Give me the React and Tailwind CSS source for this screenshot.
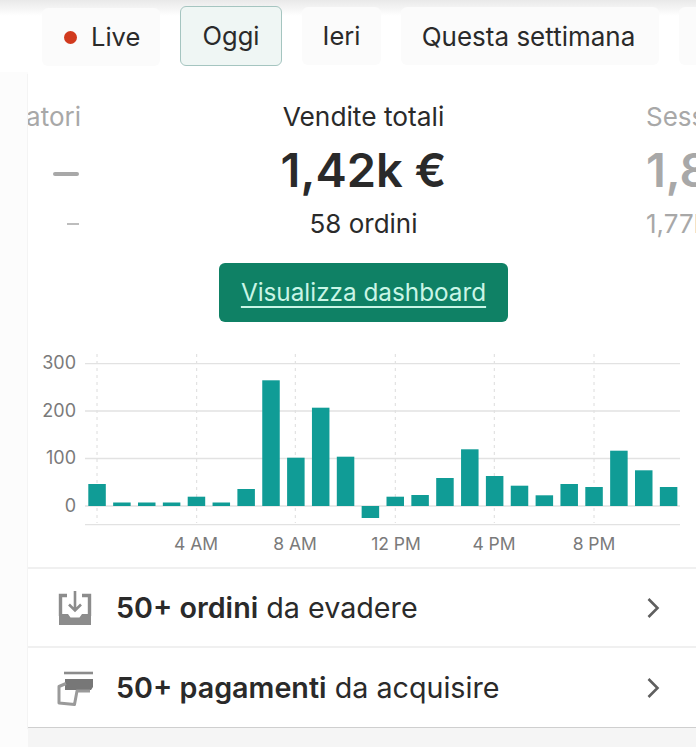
import React from "react";

const tops = [484, 502.5, 502.5, 502.5, 496.7, 502.5, 489, 380.3, 457.7, 407.7, 456.7, 518, 496.7, 495, 478, 449.3, 476, 485.7, 495.3, 484, 487, 450.7, 470.3, 487];
const base = 506;
const gridY = [363.7, 411, 458.5, 506, 524.7];
const yLabels = [["300", 362], ["200", 410], ["100", 457], ["0", 505]];
const xLabels = [["4 AM", 196], ["8 AM", 295], ["12 PM", 396], ["4 PM", 494], ["8 PM", 594]];
const vLines = [97, 196.7, 295.3, 395.3, 494.3, 594];

function Chart() {
  return (
    <svg viewBox="28 340 668 227" className="block w-[668px] h-[227px]">
      {vLines.map((x) => (
        <line key={x} x1={x} x2={x} y1="354" y2="523" stroke="#dcdcdc" strokeWidth="1" strokeDasharray="3 4" />
      ))}
      {gridY.map((y) => (
        <line key={y} x1="85" x2="680" y1={y} y2={y} stroke="#e2e2e2" strokeWidth="1.3" />
      ))}
      {tops.map((t, i) => {
        const x = 88.3 + 24.85 * i;
        const y = Math.min(t, base);
        const h = Math.abs(t - base);
        return <rect key={i} x={x} y={y} width="17.5" height={h} fill="#109c96" />;
      })}
      {yLabels.map(([l, y]) => (
        <text key={l} x="76" y={y} textAnchor="end" dominantBaseline="central" fontSize="18" fill="#7a7a7a">{l}</text>
      ))}
      {xLabels.map(([l, x]) => (
        <text key={l} x={x} y="543" textAnchor="middle" dominantBaseline="central" fontSize="17.5" fill="#7a7a7a">{l}</text>
      ))}
    </svg>
  );
}

function InboxIcon() {
  return (
    <svg viewBox="0 0 34 36" className="w-[34px] h-[36px]" fill="none">
      <path d="M9 5.5H2.5V26" stroke="#8c8c8c" strokeWidth="3.4" />
      <path d="M24 5.5h7.5V26" stroke="#8c8c8c" strokeWidth="3.4" />
      <path d="M1 35V24h9l2.5 3.5h9L24 24h9v11z" fill="#8c8c8c" />
      <path d="M17 1v19M11 14.5l6 6 6-6" stroke="#8c8c8c" strokeWidth="2.6" />
    </svg>
  );
}

function CardIcon() {
  return (
    <svg viewBox="0 0 38 36" className="w-[38px] h-[36px] -ml-[1px]" fill="none">
      <path d="M7 3h29" stroke="#8c8c8c" strokeWidth="2.6" />
      <path d="M8 9h28v8l-2 3H8z" fill="#777" />
      <path d="M9 13.5L2 16.5v16.5l15.5 1.5 2.5-13.5H33" stroke="#9a9a9a" strokeWidth="3" strokeLinejoin="round" />
    </svg>
  );
}

function Chevron() {
  return (
    <svg viewBox="0 0 14 22" className="w-[14px] h-[22px]" fill="none">
      <path d="M2.5 2l9 9-9 9" stroke="#5f5f5f" strokeWidth="2.6" />
    </svg>
  );
}

function Tab({ className, children }) {
  return <div className={"rounded-md flex items-center shrink-0 " + className}>{children}</div>;
}

function Row({ icon, bold, rest, className }) {
  return (
    <div className={"flex items-center pr-[36px] " + className}>
      <div className="w-[88px] pl-[30px] flex items-center shrink-0">{icon}</div>
      <div className="flex-1 text-[28.7px] text-[#2a2a2a]">
        <span className="font-semibold">{bold}</span> {rest}
      </div>
      <Chevron />
    </div>
  );
}

export default function App() {
  return (
    <div className="w-[696px] h-[747px] overflow-hidden flex flex-col bg-white text-[#2a2a2a] font-['Inter','Liberation_Sans',sans-serif]">
      <div className="h-[72px] shrink-0 flex items-center gap-[20px] pl-[42px] bg-gradient-to-b from-[#e9e9e9] via-white via-[22%] to-white">
        <Tab className="w-[118px] h-[58px] mt-[2px] pl-[22px] gap-[15px] text-[25.5px] bg-[#fbfbfb]">
          <span className="w-[13px] h-[13px] rounded-full bg-[#d13a1e]" />
          <span className="-ml-[1px]">Live</span>
        </Tab>
        <Tab className="w-[102px] h-[60px] -mt-[1px] pt-[2px] justify-center text-[25.5px] bg-[#eff6f4] border border-[#a5c5c0]">Oggi</Tab>
        <Tab className="w-[79px] h-[58px] justify-center text-[25.5px] bg-[#fbfbfb]">Ieri</Tab>
        <Tab className="w-[258px] h-[58px] pr-[3px] justify-center text-[26px] bg-[#fbfbfb]">Questa settimana</Tab>
        <Tab className="w-[40px] h-[58px] bg-[#fbfbfb]" />
      </div>

      <div className="flex-1 pl-[28px] bg-[#fcfcfc] flex flex-col">
        <div className="flex-1 bg-white flex flex-col shadow-[0_2px_1px_#cfcfcf]">
          <div className="flex pt-[28px]">
            <div className="w-[53px] shrink-0 overflow-hidden flex flex-col items-end text-[#a8a8a8]">
              <div className="h-[34px] text-[26px] leading-[34px] whitespace-nowrap">Visitatori</div>
              <div className="h-[64px] mt-[8px] pr-[2px] flex items-center">
                <span className="block w-[26px] h-[4px] bg-[#a8a8a8] rounded-sm" />
              </div>
              <div className="h-[34px] mt-[1px] pr-[2px] flex items-center">
                <span className="block w-[12px] h-[2px] bg-[#bdbdbd]" />
              </div>
            </div>
            <div className="w-[565px] shrink-0 flex flex-col items-center">
              <div className="h-[34px] text-[26.3px] leading-[34px]">Vendite totali</div>
              <div className="h-[56px] mt-[8px] text-[47px] leading-[56px] font-semibold">1,42k €</div>
              <div className="h-[34px] mt-[9px] text-[26px] leading-[34px]">58 ordini</div>
              <div className="mt-[22px] w-[289px] h-[59px] rounded-md bg-[#0f8165] flex items-center justify-center text-[24.3px] text-[#c9f5e6] underline underline-offset-[5px] decoration-2">
                Visualizza dashboard
              </div>
            </div>
            <div className="flex-1 min-w-0 overflow-hidden text-[#a8a8a8] whitespace-nowrap">
              <div className="h-[34px] text-[26px] leading-[34px]">Sessioni</div>
              <div className="h-[56px] mt-[8px] text-[47px] leading-[56px] font-semibold">1,8k</div>
              <div className="h-[34px] mt-[9px] text-[26px] leading-[34px]">1,77k</div>
            </div>
          </div>
          <div className="mt-[18px] border-b-2 border-[#f0f0f0]">
            <Chart />
          </div>
          <Row icon={<InboxIcon />} bold="50+ ordini" rest="da evadere" className="h-[79px] border-b-2 border-[#f0f0f0]" />
          <Row icon={<CardIcon />} bold="50+ pagamenti" rest="da acquisire" className="flex-1" />
        </div>
        <div className="h-[19px] mt-[1px] shrink-0 bg-[#f5f5f5]" />
      </div>
    </div>
  );
}
